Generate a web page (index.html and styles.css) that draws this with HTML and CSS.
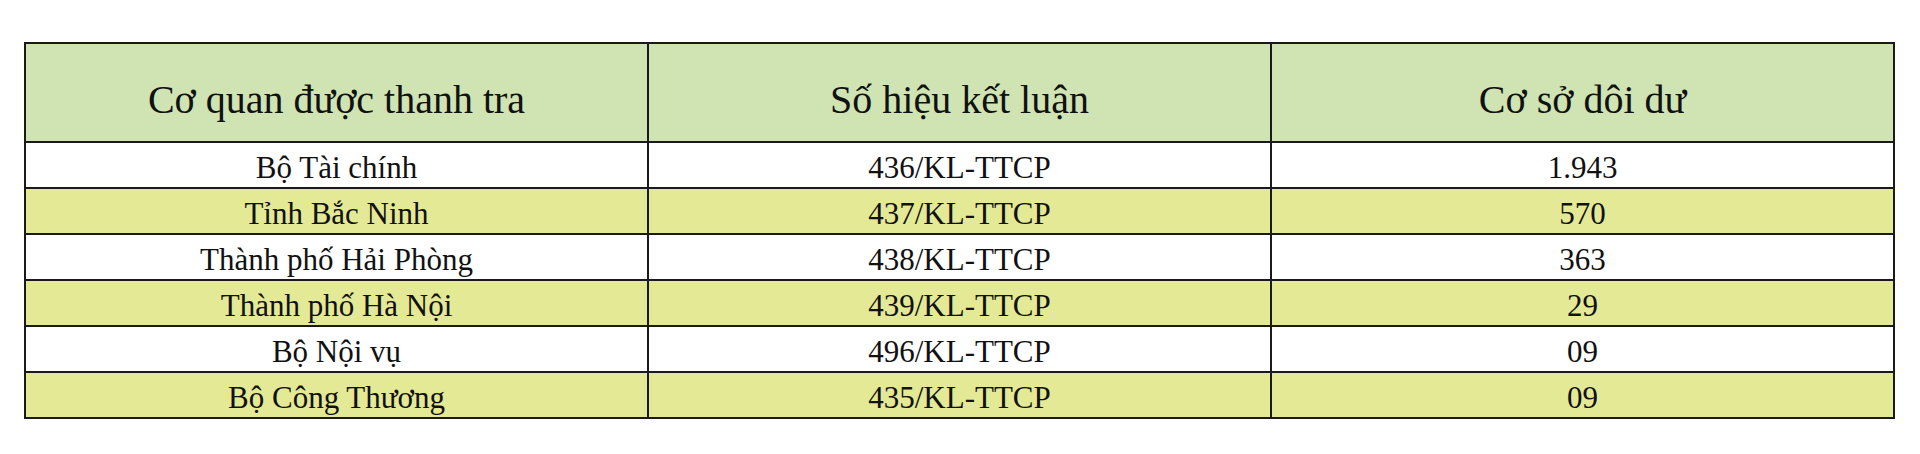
FILE: index.html
```html
<!DOCTYPE html>
<html lang="vi">
<head>
<meta charset="utf-8">
<title>Cơ sở dôi dư</title>
<link rel="stylesheet" href="styles.css">
</head>
<body>
<table class="tbl">
  <colgroup><col class="c"><col class="c"><col class="c"></colgroup>
  <thead>
    <tr class="head"><th>Cơ quan được thanh tra</th><th>Số hiệu kết luận</th><th>Cơ sở dôi dư</th></tr>
  </thead>
  <tbody>
    <tr class="w"><td>Bộ Tài chính</td><td>436/KL-TTCP</td><td>1.943</td></tr>
    <tr class="y"><td>Tỉnh Bắc Ninh</td><td>437/KL-TTCP</td><td>570</td></tr>
    <tr class="w"><td>Thành phố Hải Phòng</td><td>438/KL-TTCP</td><td>363</td></tr>
    <tr class="y"><td>Thành phố Hà Nội</td><td>439/KL-TTCP</td><td>29</td></tr>
    <tr class="w"><td>Bộ Nội vụ</td><td>496/KL-TTCP</td><td>09</td></tr>
    <tr class="y"><td>Bộ Công Thương</td><td>435/KL-TTCP</td><td>09</td></tr>
  </tbody>
</table>
</body>
</html>
```

FILE: styles.css
```css
html, body { margin: 0; padding: 0; background: #ffffff; }
body { font-family: "Liberation Serif", "Times New Roman", serif; color: #111; }
.tbl {
  margin: 42px 0 0 24px;
  width: 1871px;
  border-collapse: collapse;
  table-layout: fixed;
  border: 2px solid #1a1a1a;
}
.c { width: 33.333%; }
.tbl th, .tbl td {
  border: 2px solid #1a1a1a;
  text-align: center;
  vertical-align: middle;
  padding: 0;
}
.tbl th {
  font-weight: normal;
  font-size: 40px;
  height: 83px;
  padding-top: 14px;
  background: #cfe4b2;
}
.tbl td {
  font-size: 31px;
  height: 38px;
  padding-top: 6px;
}
.w td { background: #ffffff; }
.y td { background: #e4e995; }
```
